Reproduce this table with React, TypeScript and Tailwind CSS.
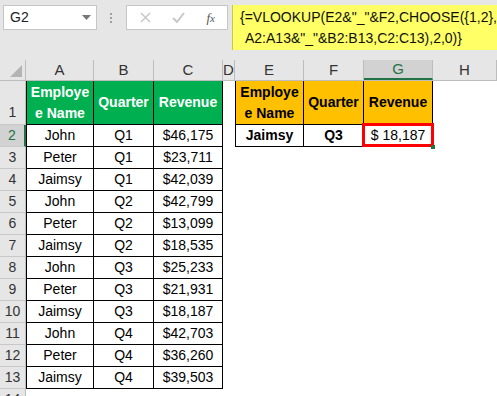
import React from "react";

const data = [
  ["John", "Q1", "$46,175"],
  ["Peter", "Q1", "$23,711"],
  ["Jaimsy", "Q1", "$42,039"],
  ["John", "Q2", "$42,799"],
  ["Peter", "Q2", "$13,099"],
  ["Jaimsy", "Q2", "$18,535"],
  ["John", "Q3", "$25,233"],
  ["Peter", "Q3", "$21,931"],
  ["Jaimsy", "Q3", "$18,187"],
  ["John", "Q4", "$42,703"],
  ["Peter", "Q4", "$36,260"],
  ["Jaimsy", "Q4", "$39,503"],
];

const cols = [
  { name: "A", w: "w-[68px]" },
  { name: "B", w: "w-[60px]" },
  { name: "C", w: "w-[69px]" },
  { name: "D", w: "w-[12px]" },
  { name: "E", w: "w-[69px]" },
  { name: "F", w: "w-[60px]" },
  { name: "G", w: "w-[69px]" },
  { name: "H", w: "flex-1" },
];

function RowHead({ n, active, tall }: { n: number; active?: boolean; tall?: boolean }) {
  return (
    <div
      className={`w-[26px] shrink-0 flex justify-center border-b border-[#c8c8c8] ${
        tall ? "items-end pb-[1px]" : "items-center"
      } ${
        active
          ? "bg-[#d2d2d2] text-[#217346] border-r-2 border-r-[#217346]"
          : "bg-[#e6e6e6] text-[#333] border-r border-r-[#bdbdbd]"
      }`}
    >
      {n}
    </div>
  );
}

export default function App() {
  return (
    <div
      className="w-[497px] h-[396px] overflow-hidden bg-white text-[14px] text-black"
      style={{ fontFamily: '"Liberation Sans", Arial, sans-serif' }}
    >
      {/* formula bar */}
      <div className="h-[60px] bg-[#e6e6e6] flex items-start pt-[5px]">
        <div className="ml-[3px] w-[101px] h-[25px] bg-white border border-[#c6c6c6] flex items-center justify-between pl-[6px] pr-[5px] text-[#222]">
          <span>G2</span>
          <svg width="9" height="5" viewBox="0 0 9 5">
            <path d="M0 0h9L4.5 5z" fill="#777" />
          </svg>
        </div>
        <div className="w-[31px] h-[25px] flex flex-col items-center justify-center gap-[2px]">
          <span className="w-[2px] h-[2px] bg-[#a0a0a0]" />
          <span className="w-[2px] h-[2px] bg-[#a0a0a0]" />
          <span className="w-[2px] h-[2px] bg-[#a0a0a0]" />
        </div>
        <div className="w-[109px] h-[25px] bg-white border border-[#c6c6c6] flex items-center justify-between pl-[13px] pr-[12px]">
          <svg width="11" height="11" viewBox="0 0 11 11">
            <path d="M1 1l9 9M10 1l-9 9" stroke="#c8c8c8" strokeWidth="1.5" />
          </svg>
          <svg width="13" height="11" viewBox="0 0 13 11">
            <path d="M1 6l4 4 7-9" stroke="#c8c8c8" strokeWidth="2" fill="none" />
          </svg>
          <span
            className="italic text-[#555] text-[13px]"
            style={{ fontFamily: '"Liberation Serif", serif' }}
          >
            f<span className="text-[11px]">x</span>
          </span>
        </div>
        <div className="ml-[4px] flex-1 h-[45px] bg-[#ffff66] border-l border-[#c8c850] pl-[7px] pt-[2px] leading-[21px] text-[#111]">
          <div>{'{=VLOOKUP(E2&"_"&F2,CHOOSE({1,2},'}</div>
          <div className="pl-[5px]">{'A2:A13&"_"&B2:B13,C2:C13),2,0)}'}</div>
        </div>
      </div>

      {/* column headers */}
      <div className="h-[21px] flex bg-[#e6e6e6] border-b border-[#bdbdbd] text-[15px] text-[#333]">
        <div className="w-[26px] shrink-0 border-r border-[#bdbdbd] relative">
          <svg className="absolute right-[3px] bottom-[3px]" width="12" height="12" viewBox="0 0 12 12">
            <path d="M12 0v12H0z" fill="#b4b4b4" />
          </svg>
        </div>
        {cols.map((c) => (
          <div
            key={c.name}
            className={`${c.w} shrink-0 flex items-center justify-center border-r border-[#bdbdbd] ${
              c.name === "G" ? "bg-[#d2d2d2] text-[#217346] border-b-2 border-b-[#217346]" : ""
            }`}
          >
            {c.name}
          </div>
        ))}
      </div>

      {/* row 1 */}
      <div className="h-[44px] flex">
        <RowHead n={1} tall />
        <div className="w-[68px] shrink-0 bg-[#00b050] text-white font-bold border-l border-r border-b border-black flex items-center justify-center text-center leading-[21px]">
          Employe
          <br />e Name
        </div>
        <div className="w-[60px] shrink-0 bg-[#00b050] text-white font-bold border-r border-b border-black flex items-center justify-center">
          Quarter
        </div>
        <div className="w-[69px] shrink-0 bg-[#00b050] text-white font-bold border-r border-b border-black flex items-center justify-center">
          Revenue
        </div>
        <div className="w-[12px] shrink-0" />
        <div className="w-[69px] shrink-0 bg-[#ffc000] font-bold border-l border-r border-b border-black flex items-center justify-center text-center leading-[21px]">
          Employe
          <br />e Name
        </div>
        <div className="w-[60px] shrink-0 bg-[#ffc000] font-bold border-r border-b border-black flex items-center justify-center">
          Quarter
        </div>
        <div className="w-[69px] shrink-0 bg-[#ffc000] font-bold border-r border-b border-black flex items-center justify-center">
          Revenue
        </div>
      </div>

      {/* rows 2-13 */}
      {data.map((r, i) => (
        <div key={i} className="h-[22px] flex">
          <RowHead n={i + 2} active={i === 0} />
          <div className="w-[68px] shrink-0 border-l border-r border-b border-black flex items-center justify-center">
            {r[0]}
          </div>
          <div className="w-[60px] shrink-0 border-r border-b border-black flex items-center justify-center">
            {r[1]}
          </div>
          <div className="w-[69px] shrink-0 border-r border-b border-black flex items-center justify-center">
            {r[2]}
          </div>
          <div className="w-[12px] shrink-0" />
          {i === 0 && (
            <>
              <div className="w-[69px] shrink-0 border-l border-r border-b border-black flex items-center justify-center font-bold">
                Jaimsy
              </div>
              <div className="w-[60px] shrink-0 border-r border-b border-black flex items-center justify-center font-bold">
                Q3
              </div>
              <div className="w-[69px] shrink-0 border-r border-b border-black flex items-center justify-center relative">
                $ 18,187
                <div className="absolute -left-[2px] -top-[2px] -right-[2px] -bottom-[1px] border-[3px] border-[#ff0000]" />
                <div className="absolute -right-[3px] -bottom-[3px] w-[4px] h-[4px] bg-[#217346]" />
              </div>
            </>
          )}
        </div>
      ))}

      {/* row 14 (partial) */}
      <div className="h-[22px] flex">
        <RowHead n={14} />
      </div>
    </div>
  );
}
